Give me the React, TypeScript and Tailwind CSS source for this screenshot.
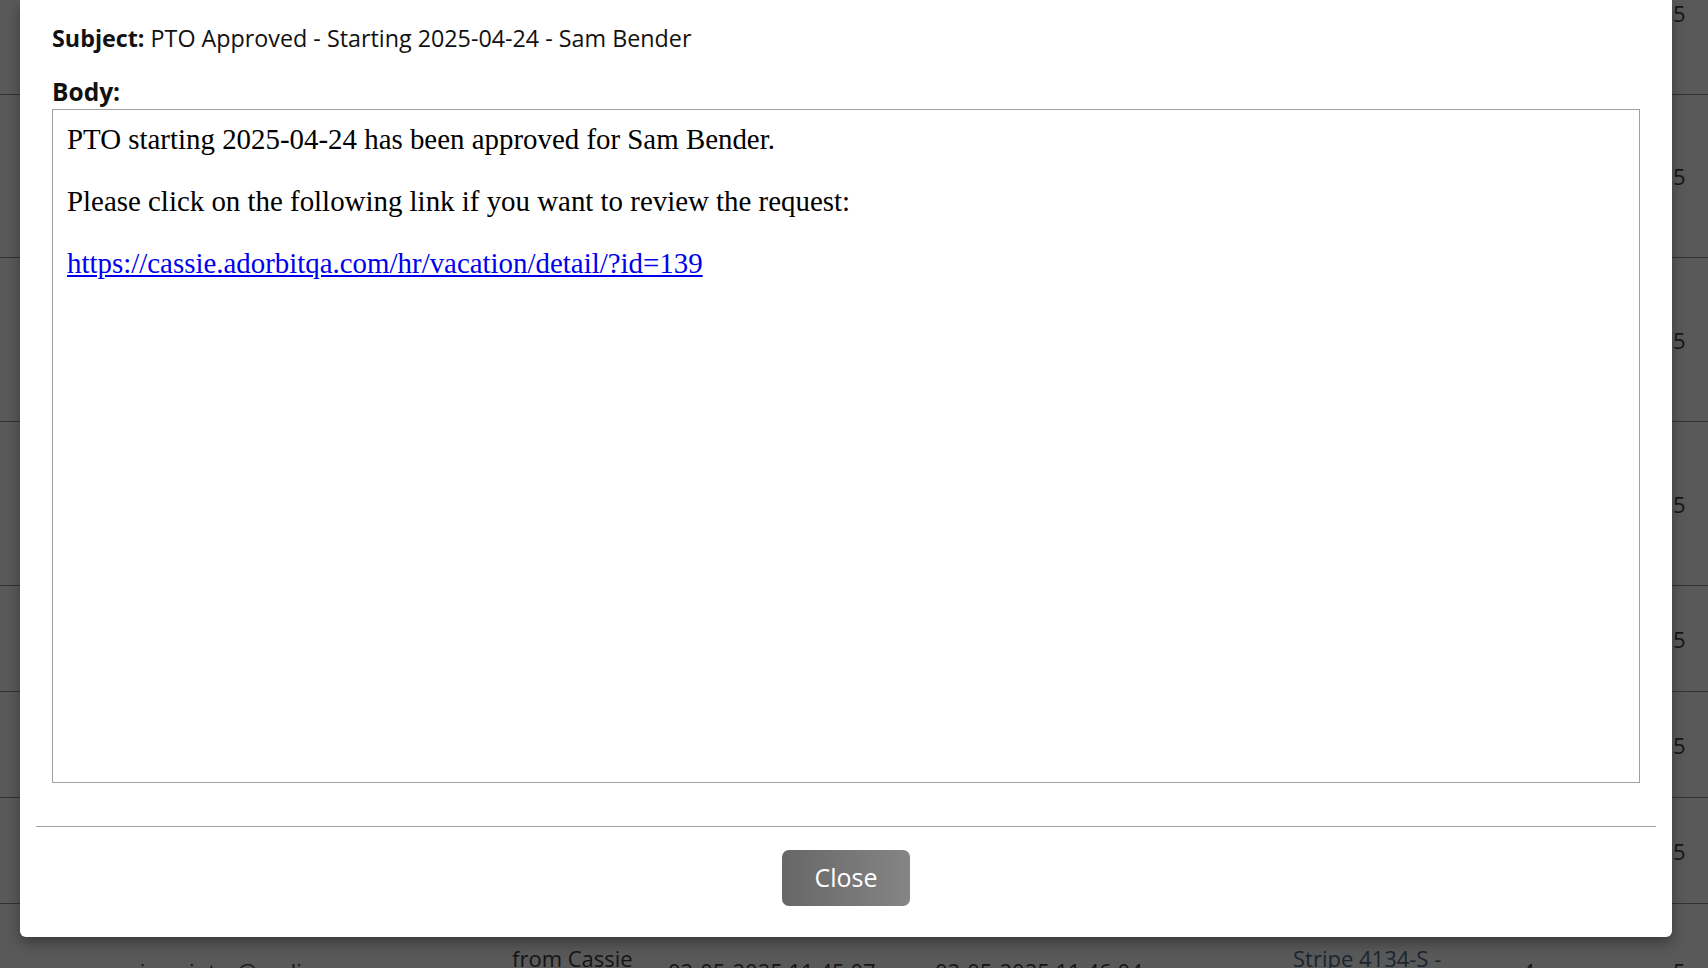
function BackgroundRows() {
  const heights = ["h-[163px]", "h-[164px]", "h-[164px]", "h-[106px]", "h-[106px]", "h-[106px]"];
  return (
    <div className="flex flex-col">
      <div className="h-[95px] border-b border-[#333] flex items-start pl-[1673px]">
        <span className="-mt-[2px] text-[22px] leading-[30px] text-[#151515]">5</span>
      </div>
      {heights.map((h, i) => (
        <div key={i} className={`${h} border-b border-[#333] flex items-center pl-[1673px]`}>
          <span className="text-[22px] leading-[30px] text-[#151515]">5</span>
        </div>
      ))}
      <div className="relative h-[80px] text-[22px] leading-[28px] text-[#151515]">
        <span className="absolute left-[96px] top-[53px]">cassie.painter@audi</span>
        <span className="absolute left-[512px] top-[40px]">from Cassie</span>
        <span className="absolute left-[668px] top-[53px]">02-05-2025 11:45:07</span>
        <span className="absolute left-[935px] top-[53px]">02-05-2025 11:46:04</span>
        <span className="absolute left-[1293px] top-[40px] text-[#1c2630]">Stripe 4134-S -</span>
        <span className="absolute left-[1522px] top-[53px]">4</span>
        <span className="absolute left-[1673px] top-[53px]">5</span>
      </div>
    </div>
  );
}

export default function App() {
  return (
    <div
      className="relative w-[1708px] h-[968px] overflow-hidden bg-[#595959]"
      style={{ fontFamily: '"Open Sans", "Liberation Sans", sans-serif' }}
    >
      <BackgroundRows />

      <div className="absolute left-[20px] top-0 w-[1652px] h-[937px] bg-white rounded-b-[6px] shadow-[0_6px_14px_rgba(0,0,0,0.35)] flex flex-col">
        <div className="px-[32px]">
          <p className="pt-[23px] text-[23.3px] leading-[30px] text-[#111]">
            <span className="font-bold">Subject:</span> PTO Approved - Starting 2025-04-24 - Sam Bender
          </p>
          <p className="mt-[24px] mb-[2px] text-[24.5px] leading-[30px] font-bold text-[#111]">Body:</p>
          <div
            className="h-[674px] border border-[#a0a0a0] pl-[14px] pt-[13px] text-[28.9px] leading-[32px] text-black"
            style={{ fontFamily: '"Liberation Serif", "Times New Roman", serif' }}
          >
            <p>PTO starting 2025-04-24 has been approved for Sam Bender.</p>
            <p className="mt-[30px]">Please click on the following link if you want to review the request:</p>
            <p className="mt-[30px]">
              <a href="#" className="text-[#0000ee] underline">
                https://cassie.adorbitqa.com/hr/vacation/detail/?id=139
              </a>
            </p>
          </div>
        </div>

        <div className="mx-[16px] mt-[43px] h-px bg-[#a0a0a0]" />

        <div className="flex justify-center pt-[23px]">
          <button className="w-[128px] h-[56px] rounded-[7px] bg-gradient-to-r from-[#676767] to-[#858585] text-white text-[25px]">
            Close
          </button>
        </div>
      </div>
    </div>
  );
}
